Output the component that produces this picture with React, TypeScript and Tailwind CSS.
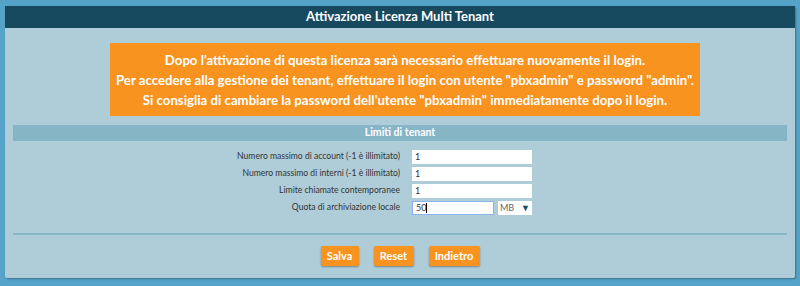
import React from "react";

const font = { fontFamily: "Lato, 'Open Sans', sans-serif" };

function Row({ label, children }: { label: string; children: React.ReactNode }) {
  return (
    <div className="flex items-center h-[17px]">
      <div className="w-[399px] pr-[12px] text-right text-[8.6px] text-[#333]">{label}</div>
      {children}
    </div>
  );
}

function Btn({ label, w }: { label: string; w: string }) {
  return (
    <button
      className={`${w} h-[20px] rounded-[2px] bg-[#f7931e] text-white text-[11px] font-bold shadow-[0_1px_2px_rgba(0,0,0,0.35)]`}
    >
      {label}
    </button>
  );
}

export default function App() {
  return (
    <div className="w-[800px] h-[286px] bg-[#55a3c9] pt-[6px] px-[5px]" style={font}>
      <div className="h-[272px] bg-[#afcdd8] rounded-[2px] shadow-[1px_1px_2px_rgba(0,0,0,0.3)] flex flex-col">
        <div className="h-[22px] bg-[#184a5f] flex items-center justify-center text-white font-bold text-[13px]">
          Attivazione Licenza Multi Tenant
        </div>
        <div className="flex justify-center pt-[15px] pl-[10px]">
          <div className="w-[590px] h-[73px] bg-[#f7931e] flex flex-col justify-center items-center text-white font-bold text-[13.2px] leading-[20px]">
            <div>Dopo l'attivazione di questa licenza sarà necessario effettuare nuovamente il login.</div>
            <div>Per accedere alla gestione dei tenant, effettuare il login con utente "pbxadmin" e password "admin".</div>
            <div>Si consiglia di cambiare la password dell'utente "pbxadmin" immediatamente dopo il login.</div>
          </div>
        </div>
        <div className="mx-[8px] mt-[9px] h-[16px] bg-[#86b5c6] flex items-center justify-center text-white font-bold text-[10.5px]">
          Limiti di tenant
        </div>
        <div className="flex flex-col mt-[7px] px-[8px]">
          <Row label="Numero massimo di account (-1 è illimitato)">
            <input className="w-[120px] h-[14px] bg-white text-[9px] text-[#333] px-[3px] outline-none" defaultValue="1" />
          </Row>
          <Row label="Numero massimo di interni (-1 è illimitato)">
            <input className="w-[120px] h-[14px] bg-white text-[9px] text-[#333] px-[3px] outline-none" defaultValue="1" />
          </Row>
          <Row label="Limite chiamate contemporanee">
            <input className="w-[120px] h-[14px] bg-white text-[9px] text-[#333] px-[3px] outline-none" defaultValue="1" />
          </Row>
          <Row label="Quota di archiviazione locale">
            <div className="flex gap-[4px]">
              <div className="w-[82px] h-[14px] bg-white border border-[#8ab4e8] text-[9px] text-[#333] px-[3px] flex items-center">
                50<span className="w-px h-[10px] bg-black" />
              </div>
              <div className="w-[34px] h-[14px] bg-white text-[9px] text-[#666] px-[2px] flex items-center justify-between">
                <span>MB</span>
                <span className="text-[#184a5f] text-[9px]">▼</span>
              </div>
            </div>
          </Row>
        </div>
        <div className="mx-[8px] mt-[17px] h-[2px] bg-[#8ab7c8]" />
        <div className="flex justify-center gap-[15px] mt-[11px]">
          <Btn label="Salva" w="w-[38px]" />
          <Btn label="Reset" w="w-[40px]" />
          <Btn label="Indietro" w="w-[51px]" />
        </div>
      </div>
    </div>
  );
}
